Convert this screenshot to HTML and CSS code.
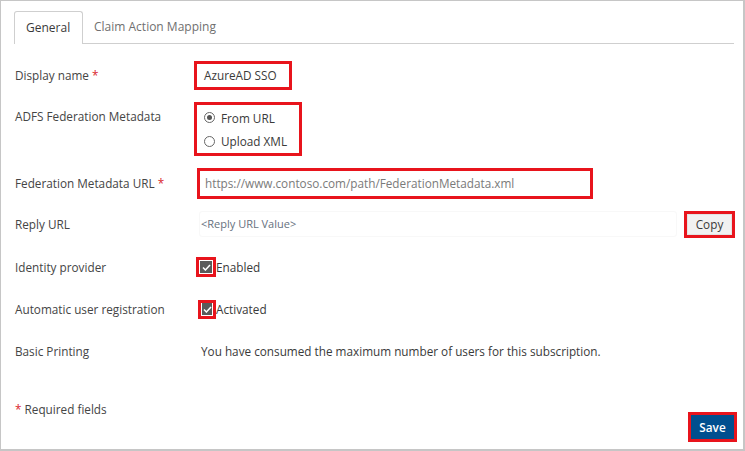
FILE: index.html
```html
<!DOCTYPE html>
<html>
<head>
<meta charset="utf-8">
<link rel="stylesheet" href="styles.css">
</head>
<body>
<div class="frame">
  <div class="tabs">
    <div class="tab active">General</div>
    <div class="tab">Claim Action Mapping</div>
  </div>
  <div class="form">
    <div class="row r1">
      <div class="label">Display name <span class="req">*</span></div>
      <div class="value"><div class="hl name-box">AzureAD SSO</div></div>
    </div>
    <div class="row r2">
      <div class="label top">ADFS Federation Metadata</div>
      <div class="value">
        <div class="hl radio-box">
          <label class="radio"><span class="dot on"></span>From URL</label>
          <label class="radio"><span class="dot"></span>Upload XML</label>
        </div>
      </div>
    </div>
    <div class="row r3">
      <div class="label">Federation Metadata URL <span class="req">*</span></div>
      <div class="value"><div class="hl url-box">https://www.contoso.com/path/FederationMetadata.xml</div></div>
    </div>
    <div class="row r4">
      <div class="label">Reply URL</div>
      <div class="value reply">
        <div class="reply-field">&lt;Reply URL Value&gt;</div>
        <div class="hl copy-box"><div class="copy-btn">Copy</div></div>
      </div>
    </div>
    <div class="row r5">
      <div class="label">Identity provider</div>
      <div class="value check-line">
        <span class="hl check-box"><span class="cb"><svg width="9" height="7" viewBox="0 0 9 7"><path d="M1 3.5 L3.4 6 L8 1" fill="none" stroke="#fff" stroke-width="1.5"/></svg></span></span>Enabled
      </div>
    </div>
    <div class="row r6">
      <div class="label">Automatic user registration</div>
      <div class="value check-line">
        <span class="hl check-box cb2"><span class="cb"><svg width="9" height="7" viewBox="0 0 9 7"><path d="M1 3.5 L3.4 6 L8 1" fill="none" stroke="#fff" stroke-width="1.5"/></svg></span></span>Activated
      </div>
    </div>
    <div class="row r7">
      <div class="label">Basic Printing</div>
      <div class="value msg">You have consumed the maximum number of users for this subscription.</div>
    </div>
    <div class="footer">
      <div class="label"><span class="req">*</span> Required fields</div>
      <div class="hl save-box"><div class="save-btn">Save</div></div>
    </div>
  </div>
</div>
</body>
</html>
```
FILE: styles.css
```css
* { box-sizing: border-box; }
html, body { margin: 0; padding: 0; background: #fff; }
body {
  font-family: "Segoe UI", "Open Sans", sans-serif;
  font-size: 11.75px;
  color: #454545;
}
.frame {
  width: 745px;
  height: 451px;
  border: 1px solid #c6c6c6;
  border-right-width: 2px;
  border-bottom-width: 2px;
  position: relative;
}
.tabs {
  display: flex;
  margin: 10px 9px 0 13px;
  border-bottom: 1px solid #cfcfcf;
  height: 33px;
}
.tab {
  height: 33px;
  padding: 0 11px;
  line-height: 32px;
  font-size: 12px;
  color: #707070;
}
.tab.active {
  border: 1px solid #cfcfcf;
  border-bottom: none;
  border-radius: 3px 3px 0 0;
  background: #fff;
  height: 33px;
  margin-bottom: -1px;
  color: #3a3a3a;
  width: 69px;
  padding: 0 0 0 11px;
}
.form {
  padding: 11px 0 0 14px;
}
.row {
  display: flex;
  align-items: center;
}
.label {
  width: 179px;
  flex: none;
  line-height: 16px;
}
.label.top { align-self: flex-start; padding-top: 13px; }
.req { color: #d9262d; }
.value { flex: 1; display: flex; align-items: center; }
.r1 { height: 40px; }
.r2 { height: 68px; }
.r3 { height: 40px; }
.r4 { height: 42px; }
.r5 { height: 44px; }
.r6 { height: 40px; }
.r7 { height: 44px; }
.hl { border: 3px solid #e8141c; }
.name-box {
  width: 98px;
  height: 29px;
  padding-left: 7px;
  line-height: 23px;
  color: #3a3a3a;
}
.radio-box {
  width: 108px;
  height: 54px;
  padding: 1px 0 0 7px;
  display: flex;
  flex-direction: column;
}
.radio {
  display: flex;
  align-items: center;
  height: 25px;
  color: #3a3a3a;
}
.dot {
  width: 11px;
  height: 11px;
  border: 1px solid #666;
  border-radius: 50%;
  margin-right: 6px;
  position: relative;
}
.dot.on::after {
  content: "";
  position: absolute;
  left: 2px; top: 2px;
  width: 5px; height: 5px;
  border-radius: 50%;
  background: #555;
}
.url-box {
  margin-left: 3px;
  width: 396px;
  height: 31px;
  padding-left: 5px;
  line-height: 25px;
  color: #7a7a7a;
}
.reply { justify-content: space-between; padding-right: 8px; }
.reply-field {
  margin-left: 5px;
  width: 478px;
  height: 26px;
  border: 1px solid #f8f8f8;
  border-radius: 3px;
  padding-left: 1px;
  line-height: 24px;
  font-size: 11px;
  color: #66717e;
}
.copy-box {
  width: 51px;
  height: 27px;
  padding: 0;
}
.copy-btn {
  width: 100%;
  height: 100%;
  background: #f1f1f1;
  border: 1px solid #e2e2e2;
  text-align: center;
  line-height: 19px;
  color: #3a3a3a;
}
.check-line { color: #3a3a3a; }
.check-box {
  margin-left: 2px;
  width: 20px;
  height: 20px;
  padding: 1px;
  display: inline-flex;
  align-items: center;
  justify-content: center;
  border-width: 3px;
}
.check-box.cb2 { margin-left: 4px; width: 18px; height: 19px; }
.cb {
  width: 12px;
  height: 12px;
  background: #5a5a5a;
  display: inline-flex;
  align-items: center;
  justify-content: center;
}
.msg { padding-left: 7px; color: #3a3a3a; }
.footer {
  margin-top: 28px;
  display: flex;
  justify-content: space-between;
  align-items: flex-start;
  padding-right: 6px;
}
.save-box {
  margin-top: 11px;
  width: 49px;
  height: 30px;
  padding: 0;
}
.save-btn {
  width: 100%;
  height: 100%;
  background: #004f8f;
  color: #fff;
  text-align: center;
  line-height: 24px;
  font-weight: 600;
}
```
